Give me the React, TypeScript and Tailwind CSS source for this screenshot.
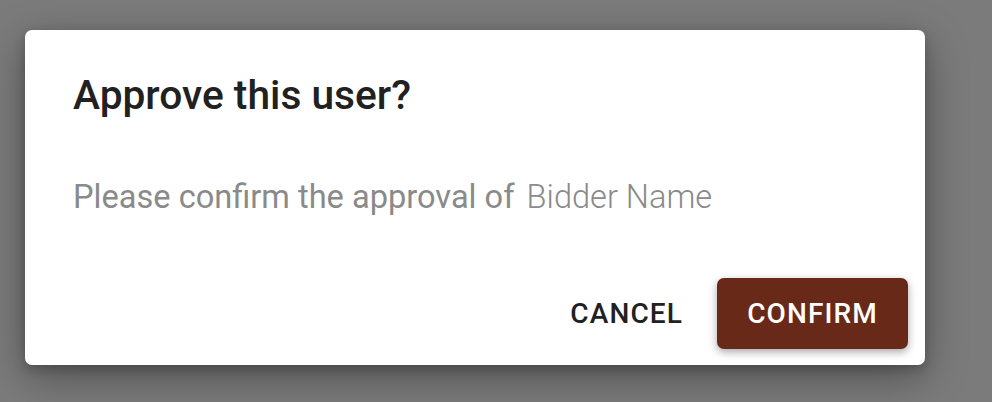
import React from "react";

export default function App() {
  return (
    <div className="w-[992px] h-[402px] bg-[#7b7b7b] overflow-hidden" style={{ fontFamily: "Roboto, 'Liberation Sans', sans-serif" }}>
      <div className="ml-[25px] mt-[30px] w-[900px] h-[335px] bg-white rounded-[7px] shadow-[0_12px_40px_rgba(0,0,0,0.35),0_4px_12px_rgba(0,0,0,0.2)] flex flex-col">
        <h2 className="px-[48px] pt-[41px] text-[40.7px] leading-[48px] font-medium text-[#212121]">Approve this user?</h2>
        <p className="px-[48px] mt-[58px] text-[32.6px] leading-[40px] text-[#8a8a8a]">
          Please confirm the approval of <span className="ml-[4px] font-light">Bidder Name</span>
        </p>
        <div className="mt-auto flex justify-end items-center gap-[26px] pr-[17px] pb-[16px]">
          <button className="text-[28px] font-medium tracking-[0.04em] text-[#212121] px-2 py-2">CANCEL</button>
          <button className="w-[191px] h-[71px] rounded-[7px] bg-[#692918] text-white text-[28px] font-medium tracking-[0.04em] shadow-[0_3px_8px_rgba(0,0,0,0.35)]">CONFIRM</button>
        </div>
      </div>
    </div>
  );
}
